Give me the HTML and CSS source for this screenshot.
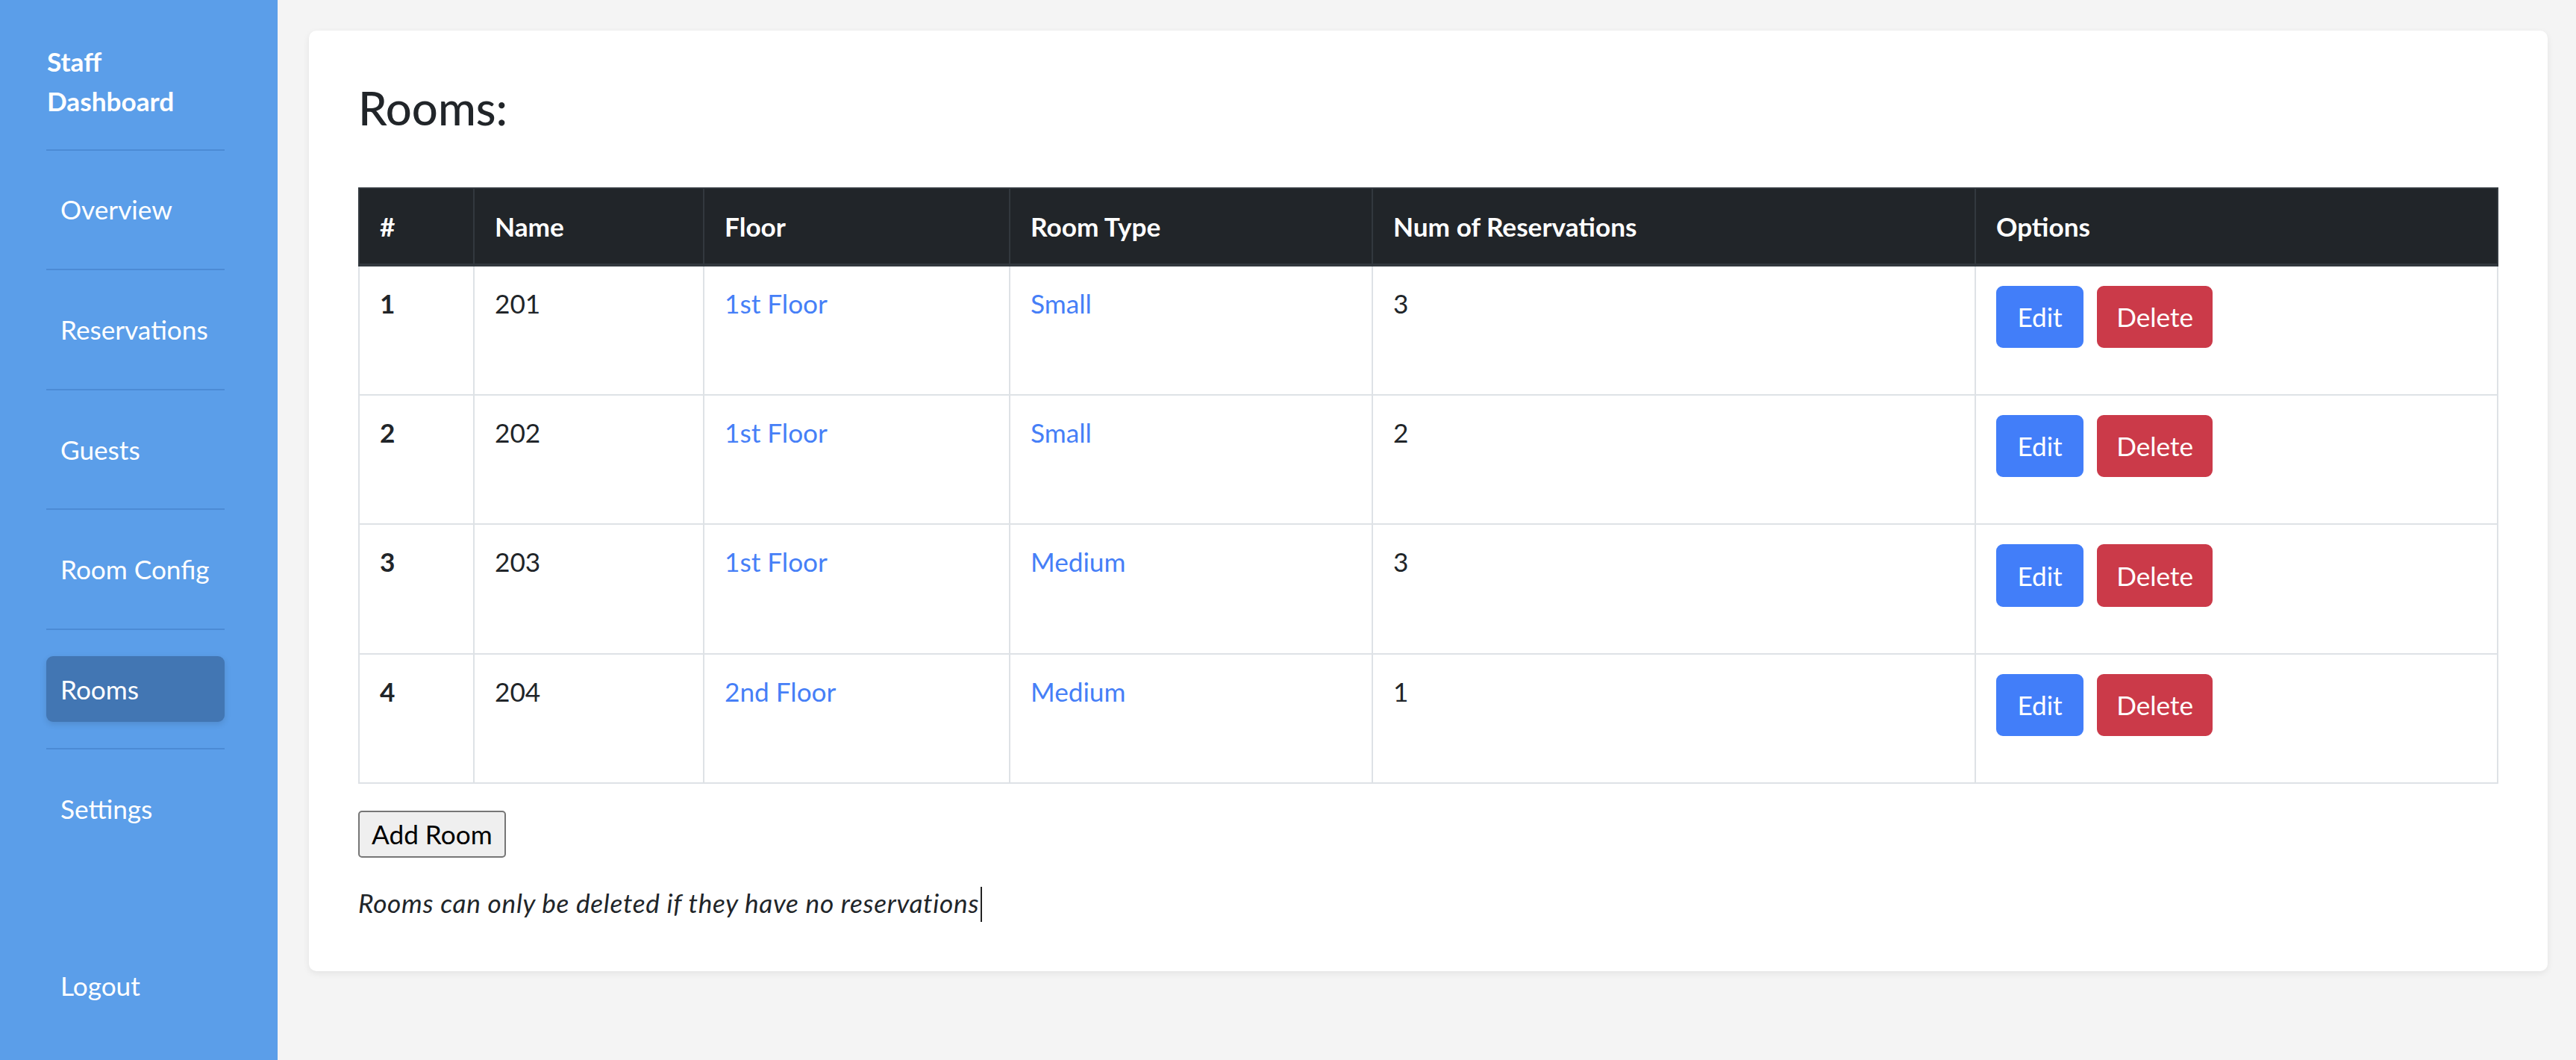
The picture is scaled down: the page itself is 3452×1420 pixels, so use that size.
FILE: index.html
```html
<!DOCTYPE html>
<html lang="en">
<head>
<meta charset="utf-8">
<title>Staff Dashboard - Rooms</title>
<link rel="stylesheet" href="styles.css">
</head>
<body>
<div class="layout">
  <aside class="sidebar">
    <div class="brand">Staff<br>Dashboard</div>
    <ul class="nav">
      <li class="nav-item"><a class="nav-link" href="#">Overview</a></li>
      <li class="nav-item"><a class="nav-link" href="#">Reservations</a></li>
      <li class="nav-item"><a class="nav-link" href="#">Guests</a></li>
      <li class="nav-item"><a class="nav-link" href="#">Room Config</a></li>
      <li class="nav-item"><a class="nav-link active" href="#">Rooms</a></li>
      <li class="nav-item"><a class="nav-link" href="#">Settings</a></li>
    </ul>
    <a class="nav-link logout" href="#">Logout</a>
  </aside>
  <main class="main">
    <section class="card">
      <h3 class="title">Rooms:</h3>
      <table class="rooms">
        <colgroup>
          <col class="c-num">
          <col class="c-name">
          <col class="c-floor">
          <col class="c-type">
          <col class="c-res">
          <col class="c-opt">
        </colgroup>
        <thead>
          <tr>
            <th>#</th>
            <th>Name</th>
            <th>Floor</th>
            <th>Room Type</th>
            <th>Num of Reservations</th>
            <th>Options</th>
          </tr>
        </thead>
        <tbody>
          <tr>
            <th class="rowhead">1</th>
            <td>201</td>
            <td><a class="link" href="#">1st Floor</a></td>
            <td><a class="link" href="#">Small</a></td>
            <td>3</td>
            <td><div class="actions"><button class="btn btn-edit">Edit</button><button class="btn btn-delete">Delete</button></div></td>
          </tr>
          <tr>
            <th class="rowhead">2</th>
            <td>202</td>
            <td><a class="link" href="#">1st Floor</a></td>
            <td><a class="link" href="#">Small</a></td>
            <td>2</td>
            <td><div class="actions"><button class="btn btn-edit">Edit</button><button class="btn btn-delete">Delete</button></div></td>
          </tr>
          <tr>
            <th class="rowhead">3</th>
            <td>203</td>
            <td><a class="link" href="#">1st Floor</a></td>
            <td><a class="link" href="#">Medium</a></td>
            <td>3</td>
            <td><div class="actions"><button class="btn btn-edit">Edit</button><button class="btn btn-delete">Delete</button></div></td>
          </tr>
          <tr>
            <th class="rowhead">4</th>
            <td>204</td>
            <td><a class="link" href="#">2nd Floor</a></td>
            <td><a class="link" href="#">Medium</a></td>
            <td>1</td>
            <td><div class="actions"><button class="btn btn-edit">Edit</button><button class="btn btn-delete">Delete</button></div></td>
          </tr>
        </tbody>
      </table>
      <div class="add-row"><button class="add-btn">Add Room</button></div>
      <p class="note">Rooms can only be deleted if they have no reservations<span class="caret"></span></p>
    </section>
  </main>
</div>
</body>
</html>
```
FILE: styles.css
```css
* { box-sizing: border-box; }

html, body {
  margin: 0;
  padding: 0;
}

body {
  font-family: Lato, "Open Sans", "DejaVu Sans", sans-serif;
  font-size: 35.2px;
  color: #212529;
  background: #f4f4f4;
}

.layout {
  display: flex;
  width: 3452px;
  height: 1420px;
  overflow: hidden;
}

/* Sidebar */
.sidebar {
  width: 372px;
  flex: none;
  height: 1420px;
  background: #5b9ee9;
  padding: 56px 71px 56px 62px;
  display: flex;
  flex-direction: column;
  color: #fff;
}

.brand {
  font-weight: 700;
  font-size: 35.2px;
  line-height: 52.8px;
  padding-left: 1px;
  padding-bottom: 38px;
  border-bottom: 2px solid #4c8bd5;
}

.nav {
  list-style: none;
  margin: 0;
  padding: 0;
}

.nav-item {
  padding: 35.3px 0;
  border-bottom: 2px solid #4c8bd5;
}

.nav-item:last-child {
  border-bottom: none;
}

.nav-link {
  display: block;
  color: #fff;
  text-decoration: none;
  font-size: 35.2px;
  line-height: 52.8px;
  padding: 17.6px 19px;
  border-radius: 9px;
}

.nav-link.active {
  background: #4276b3;
  box-shadow: 0 3px 8px rgba(0, 0, 0, 0.12);
}

.logout {
  margin-top: auto;
}

/* Main */
.main {
  flex: 1;
  padding: 41px 41px 0 42px;
}

.card {
  background: #fff;
  border-radius: 10px;
  box-shadow: 0 3px 10px rgba(0, 0, 0, 0.07);
  padding: 66px;
}

.title {
  margin: 0 0 70px 0;
  font-size: 61.6px;
  line-height: 74px;
  font-weight: 500;
  color: #212529;
}

/* Table */
.rooms {
  width: 2866px;
  border-collapse: collapse;
  table-layout: fixed;
  margin-bottom: 36px;
}

.c-num { width: 154px; }
.c-name { width: 308px; }
.c-floor { width: 410px; }
.c-type { width: 486px; }
.c-res { width: 808px; }
.c-opt { width: 700px; }

.rooms thead th {
  background: #212529;
  color: #fff;
  font-weight: 700;
  text-align: left;
  font-size: 35.2px;
  line-height: 48px;
  padding: 26px 27px;
  border: 2px solid #32383e;
  border-bottom: 4px solid #32383e;
  vertical-align: bottom;
}

.rooms tbody td,
.rooms tbody th {
  border: 2px solid #dee2e6;
  padding: 26px 27px;
  vertical-align: top;
  text-align: left;
  font-size: 35.2px;
  line-height: 47px;
}

.rooms tbody th.rowhead {
  font-weight: 700;
}

.rooms tbody td {
  font-weight: 400;
}

.link {
  color: #467ff7;
  text-decoration: none;
}

.actions {
  display: flex;
  gap: 18px;
  margin-bottom: 36px;
}

.btn {
  font-family: inherit;
  font-size: 35.2px;
  line-height: 52.8px;
  padding: 13.2px 26.4px;
  border: 2.2px solid transparent;
  border-radius: 9px;
  color: #fff;
  cursor: pointer;
}

.btn-edit {
  background: #427ef9;
  border-color: #427ef9;
}

.btn-delete {
  background: #cb3a49;
  border-color: #cb3a49;
  padding-left: 24px;
  padding-right: 24px;
}

/* Below table */
.add-row {
  display: flex;
}

.add-btn {
  font-family: inherit;
  font-size: 35.2px;
  line-height: 47px;
  padding: 6px 16px;
  border: 2px solid #767676;
  border-radius: 5px;
  background: #efefef;
  color: #000;
}

.note {
  margin: 34px 0 0 0;
  font-style: italic;
  font-size: 35.2px;
  line-height: 52.8px;
  letter-spacing: 0.7px;
  color: #212529;
}

.caret {
  display: inline-block;
  width: 2px;
  height: 47px;
  background: #222;
  vertical-align: -12px;
  margin-left: 2px;
}
```
